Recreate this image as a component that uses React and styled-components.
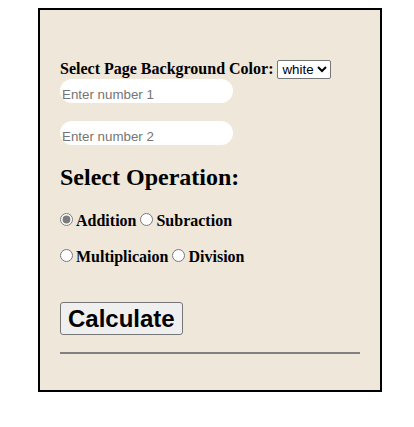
import React, { useState } from "react";
import styled, { createGlobalStyle } from "styled-components";

const GlobalStyle = createGlobalStyle`
  body {
    margin: 8px;
    background: #ffffff;
    font-family: "Liberation Serif", "Times New Roman", serif;
  }
`;

const Panel = styled.div`
  box-sizing: content-box;
  width: 300px;
  margin: 0 0 0 30px;
  padding: 50px 20px 36px;
  border: 2px solid #000;
  background: #efe7da;
  color: #000;
  font-family: "Liberation Serif", "Times New Roman", serif;
`;

const ColorRow = styled.div`
  display: flex;
  align-items: baseline;
  gap: 4px;
  height: 19px;
  font-size: 16px;
  font-weight: bold;
`;

const ColorSelect = styled.select`
  font-family: "Liberation Sans", Arial, sans-serif;
  font-size: 13.33px;
  height: 19px;
  padding: 0;
  border: 1px solid #767676;
  border-radius: 2px;
  background: #fff;
  color: #000;
`;

const NumberInput = styled.input`
  display: block;
  box-sizing: border-box;
  width: 173px;
  height: 24px;
  margin-top: ${(p) => p.$gap}px;
  padding: 6px 2px 0;
  border: none;
  border-radius: 12px;
  background: #fff;
  font-family: "Liberation Sans", Arial, sans-serif;
  font-size: 13.33px;
  outline: none;
  &::placeholder {
    color: #757575;
  }
`;

const Heading = styled.h2`
  margin: 19px 0 19px;
  font-size: 24px;
  font-weight: bold;
  line-height: normal;
`;

const RadioRow = styled.div`
  height: 20px;
  margin-top: ${(p) => p.$gap}px;
  font-size: 16px;
  font-weight: bold;
  white-space: nowrap;
`;

const Choice = styled.label`
  margin-right: 4px;
`;

const Radio = styled.input`
  width: 13px;
  height: 13px;
  margin: 3px 3px 0 0;
  accent-color: #7b7b7b;
`;

const CalcButton = styled.button`
  display: block;
  box-sizing: border-box;
  height: 33px;
  margin-top: 36px;
  padding: 0 7px;
  border: 1px solid #767676;
  border-radius: 3px;
  background: #efefef;
  color: #000;
  font-family: "Liberation Sans", Arial, sans-serif;
  font-size: 24px;
  font-weight: bold;
`;

const Rule = styled.hr`
  margin: 17px 0 0;
  height: 0;
  border: none;
  border-top: 2px solid #808080;
`;

export default function App() {
  const [op, setOp] = useState("add");
  const [color, setColor] = useState("white");
  const ops1 = [
    ["add", "Addition"],
    ["sub", "Subraction"],
  ];
  const ops2 = [
    ["mul", "Multiplicaion"],
    ["div", "Division"],
  ];
  const renderOps = (list) =>
    list.map(([key, label]) => (
      <Choice key={key}>
        <Radio
          type="radio"
          name="op"
          checked={op === key}
          onChange={() => setOp(key)}
        />
        {label}
      </Choice>
    ));
  return (
    <>
      <GlobalStyle />
      <Panel>
        <ColorRow>
          <span>Select Page Background Color:</span>
          <ColorSelect value={color} onChange={(e) => setColor(e.target.value)}>
            <option value="white">white</option>
            <option value="grey">grey</option>
            <option value="pink">pink</option>
          </ColorSelect>
        </ColorRow>
        <NumberInput $gap={0} type="text" placeholder="Enter number 1" />
        <NumberInput $gap={18} type="text" placeholder="Enter number 2" />
        <Heading>Select Operation:</Heading>
        <RadioRow $gap={0}>{renderOps(ops1)}</RadioRow>
        <RadioRow $gap={16}>{renderOps(ops2)}</RadioRow>
        <CalcButton>Calculate</CalcButton>
        <Rule />
      </Panel>
    </>
  );
}
